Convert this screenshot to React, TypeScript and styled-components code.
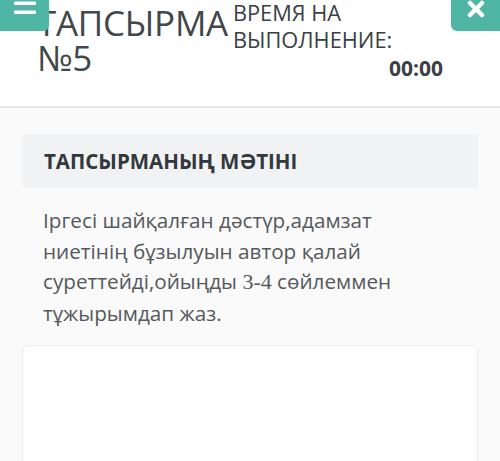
import React from 'react';
import styled, { createGlobalStyle } from 'styled-components';

const teal = '#4fb5a5';

const GlobalStyle = createGlobalStyle`
  body {
    margin: 0;
    background: #fafafa;
    font-family: 'Open Sans', 'Noto Sans', sans-serif;
    color: #3d4246;
  }
`;

const Page = styled.div`
  height: 461px;
  overflow: hidden;
`;

const Header = styled.header`
  position: relative;
  height: 108px;
  background: #ffffff;
  border-bottom: 2px solid #e6e6e6;
  display: flex;
  align-items: flex-start;
  padding: 0 57px 0 37px;
  box-sizing: border-box;
`;

const CornerButton = styled.button<{ $side: 'left' | 'right' }>`
  position: absolute;
  top: 0;
  ${({ $side }) => ($side === 'left' ? 'left: 0;' : 'right: 0;')}
  width: 49px;
  height: 31px;
  border: none;
  padding: 0;
  background: ${teal};
  border-radius: ${({ $side }) => ($side === 'left' ? '0 0 6px 0' : '0 0 0 6px')};
  display: flex;
  align-items: flex-start;
  justify-content: center;
  z-index: 2;
`;

const Title = styled.h1`
  margin: 0;
  padding-top: 5px;
  font-size: 35px;
  font-weight: 400;
  line-height: 35px;
  color: #42474b;
  letter-spacing: -0.3px;
`;

const Timer = styled.div`
  flex: 1;
  margin-left: 5px;
  display: flex;
  flex-direction: column;
  font-size: 21.8px;
  line-height: 27px;
  color: #3b4044;
`;

const TimerLabel = styled.div`
  margin-top: -1px;
`;

const TimerValue = styled.div`
  align-self: flex-end;
  font-weight: 700;
  font-size: 21px;
  margin-top: 2px;
`;

const Content = styled.main`
  padding: 26px 22px 0 23px;
`;

const SectionHead = styled.div`
  height: 54px;
  background: #f0f2f4;
  border-radius: 4px;
  display: flex;
  align-items: center;
  padding: 0 21px;
  font-size: 20.5px;
  font-weight: 700;
  color: #33383c;
`;

const TaskText = styled.p`
  margin: 17px 0 0 20px;
  font-size: 20.7px;
  line-height: 30.5px;
  color: #55595c;
  width: 380px;
`;

const Digits = styled.span`
  font-family: 'Liberation Serif', serif;
  font-size: 22px;
`;

const AnswerBox = styled.div`
  margin: 17px 0 0 -1px;
  height: 140px;
  background: #fefefe;
  border: 1.5px solid #ececec;
  border-radius: 6px;
`;

const MenuIcon = () => (
  <svg width="22" height="20" viewBox="0 0 22 20">
    <rect x="0" y="1.5" width="22" height="3.5" rx="1" fill="#fff" />
    <rect x="0" y="10.5" width="22" height="3.5" rx="1" fill="#fff" />
  </svg>
);

const CloseIcon = () => (
  <svg width="18" height="20" viewBox="0 0 18 20">
    <path d="M3 3 L15 15 M15 3 L3 15" stroke="#fff" strokeWidth="4.5" strokeLinecap="round" />
  </svg>
);

export default function App() {
  return (
    <Page>
      <GlobalStyle />
      <Header>
        <CornerButton $side="left">
          <MenuIcon />
        </CornerButton>
        <Title>
          ТАПСЫРМА
          <br />
          №5
        </Title>
        <Timer>
          <TimerLabel>
            ВРЕМЯ НА
            <br />
            ВЫПОЛНЕНИЕ:
          </TimerLabel>
          <TimerValue>00:00</TimerValue>
        </Timer>
        <CornerButton $side="right">
          <CloseIcon />
        </CornerButton>
      </Header>
      <Content>
        <SectionHead>ТАПСЫРМАНЫҢ МӘТІНІ</SectionHead>
        <TaskText>
          Іргесі шайқалған дәстүр,адамзат ниетінің бұзылуын автор қалай
          суреттейді,ойыңды <Digits>3-4</Digits> сөйлеммен тұжырымдап жаз.
        </TaskText>
        <AnswerBox />
      </Content>
    </Page>
  );
}
